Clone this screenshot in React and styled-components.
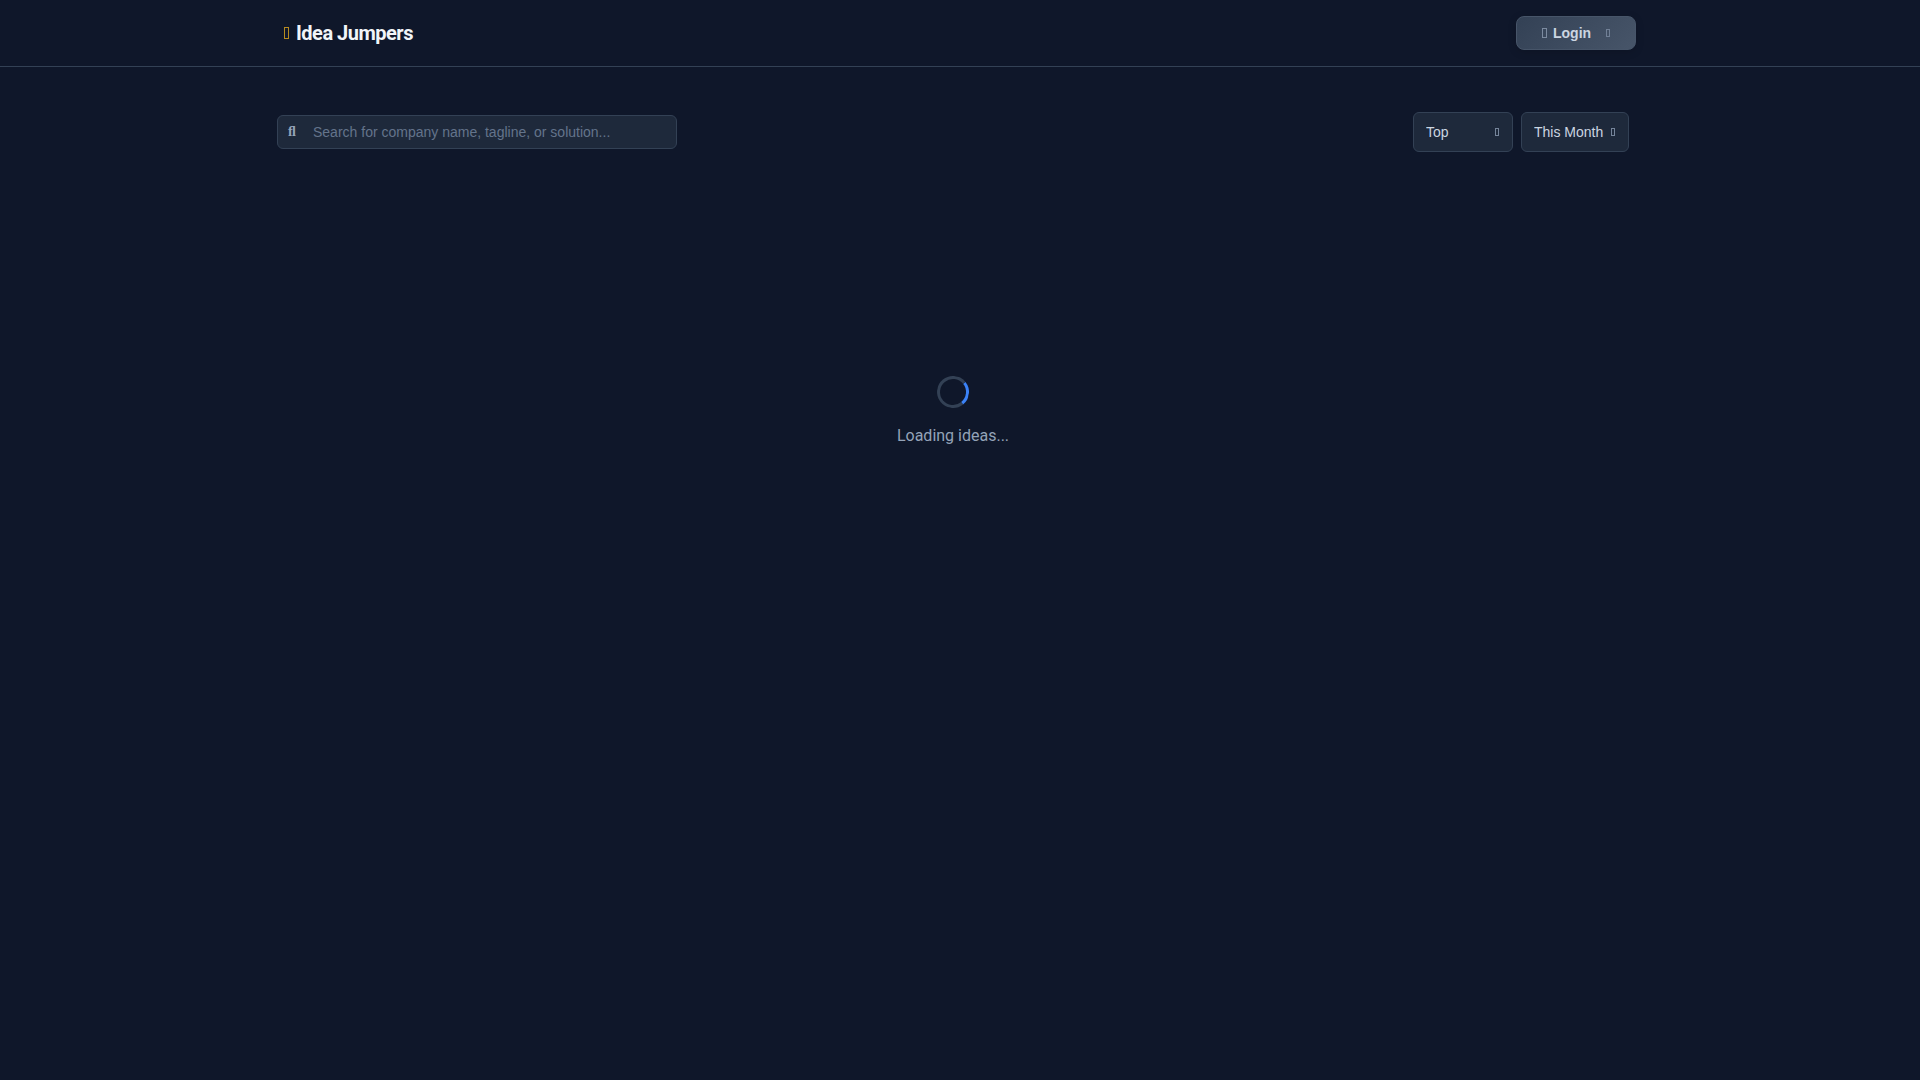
import React from "react";
import styled, { createGlobalStyle, keyframes } from "styled-components";

const GlobalStyle = createGlobalStyle`
  *, *::before, *::after { box-sizing: border-box; }
  body {
    margin: 0;
    min-height: 100vh;
    background: #0f172a;
    color: #f1f5f9;
    font-family: Roboto, sans-serif;
    font-size: 16px;
    line-height: 24px;
    -webkit-font-smoothing: antialiased;
  }
`;

const Page = styled.div`
  padding-right: 8px;
`;

const Header = styled.header`
  margin-right: -8px;
  padding-right: 8px;
  border-bottom: 1px solid #334155;
`;

const HeaderInner = styled.div`
  display: flex;
  align-items: center;
  justify-content: space-between;
  max-width: 1360px;
  margin: 0 auto;
  padding: 16px 0;
`;

const BoxIcon = styled.span`
  flex: none;
  width: ${(p) => p.$width}px;
  height: ${(p) => p.$height}px;
  border: 1px solid ${(p) => p.$color};
`;

const SearchGlyph = styled.span`
  width: 8px;
  color: #94a3b8;
  font: 700 14px/16px "Liberation Serif", serif;
`;

const Brand = styled.a`
  display: flex;
  align-items: center;
  gap: 7px;
  padding-left: 8px;
  color: #f1f5f9;
  font-size: 20px;
  font-weight: 700;
  letter-spacing: -0.5px;
  text-decoration: none;
`;

const LoginButton = styled.button`
  display: flex;
  align-items: center;
  width: 120px;
  height: 34px;
  padding: 0 25px;
  gap: 6px;
  border: 1px solid #475569;
  border-radius: 8px;
  background: linear-gradient(135deg, #334155, #475569);
  box-shadow: 0 2px 8px rgba(0, 0, 0, 0.15);
  color: #cbd5e1;
  font: 600 14px "Liberation Sans", Arial, sans-serif;
`;

const LoginArrow = styled(BoxIcon)`
  margin-left: auto;
`;

const Main = styled.main`
  max-width: 1368px;
  margin: 0 auto;
  padding: 45px 11px 0 5px;
`;

const Toolbar = styled.div`
  display: flex;
  align-items: center;
  justify-content: space-between;
`;

const SearchBox = styled.label`
  display: flex;
  align-items: center;
  width: 400px;
  height: 34px;
  padding-left: 10px;
  gap: 17px;
  border: 1px solid #334155;
  border-radius: 6px;
  background: #1e293b;
`;

const SearchInput = styled.input`
  flex: 1;
  min-width: 0;
  padding: 0;
  border: 0;
  outline: 0;
  background: transparent;
  color: #cbd5e1;
  font: 14px "Liberation Sans", Arial, sans-serif;
  &::placeholder { color: #64748b; opacity: 1; }
`;

const Filters = styled.div`
  display: flex;
  gap: 8px;
`;

const SelectWrap = styled.div`
  position: relative;
  width: ${(p) => p.$width}px;
`;

const Select = styled.select`
  appearance: none;
  width: 100%;
  height: 40px;
  padding: 0 12px;
  border: 1px solid #334155;
  border-radius: 6px;
  background: #1e293b;
  color: #cbd5e1;
  font: 14px "Liberation Sans", Arial, sans-serif;
`;

const SelectArrow = styled(BoxIcon)`
  position: absolute;
  right: 14px;
  top: 16px;
  pointer-events: none;
`;

const Loading = styled.div`
  display: flex;
  flex-direction: column;
  align-items: center;
  gap: 16px;
  padding-top: 224px;
  color: #94a3b8;
`;

const spin = keyframes`
  to { transform: rotate(456deg); }
`;

const Spinner = styled.div`
  width: 32px;
  height: 32px;
  border: 3px solid #334155;
  border-top-color: #3b82f6;
  border-radius: 50%;
  transform: rotate(96deg);
  &:hover { animation: ${spin} 1s linear infinite; }
`;

function Dropdown({ label, width, options }) {
  return (
    <SelectWrap $width={width}>
      <Select aria-label={label}>
        {options.map((o) => <option key={o}>{o}</option>)}
      </Select>
      <SelectArrow $width={4} $height={8} $color="#75849a" aria-hidden="true" />
    </SelectWrap>
  );
}

export default function App() {
  return (
    <Page>
      <GlobalStyle />
      <Header>
        <HeaderInner>
          <Brand href="#">
            <BoxIcon $width={5} $height={12} $color="#b58a20" aria-hidden="true" />
            Idea Jumpers
          </Brand>
          <LoginButton type="button">
            <BoxIcon $width={5} $height={10} $color="#7c8ba0" aria-hidden="true" />
            Login
            <LoginArrow $width={4} $height={8} $color="#718096" aria-hidden="true" />
          </LoginButton>
        </HeaderInner>
      </Header>
      <Main>
        <Toolbar>
          <SearchBox>
            <SearchGlyph aria-hidden="true">ﬂ</SearchGlyph>
            <SearchInput
              type="text"
              aria-label="Search ideas"
              placeholder="Search for company name, tagline, or solution..."
            />
          </SearchBox>
          <Filters>
            <Dropdown label="Sort by" width={100} options={["Top", "New"]} />
            <Dropdown label="Period" width={108} options={["This Month", "This Week", "Today"]} />
          </Filters>
        </Toolbar>
        <Loading role="status">
          <Spinner />
          <span>Loading ideas...</span>
        </Loading>
      </Main>
    </Page>
  );
}
